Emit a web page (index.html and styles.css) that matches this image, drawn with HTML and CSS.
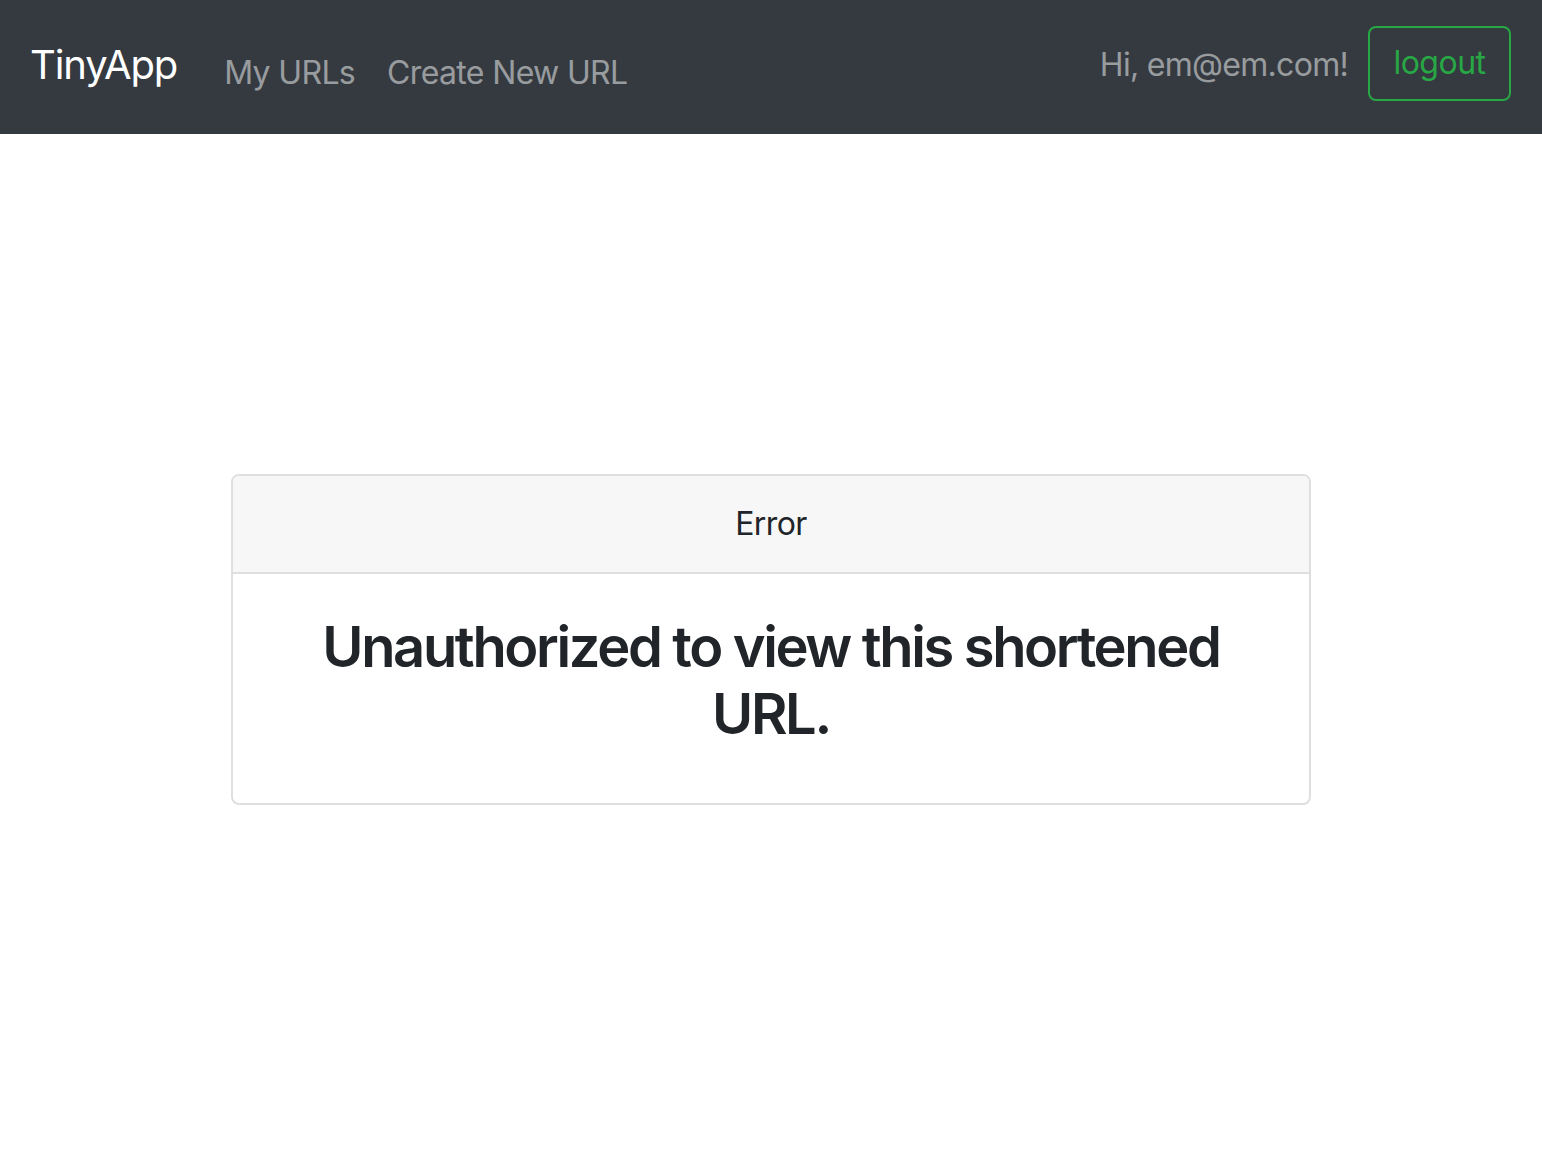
FILE: index.html
```html
<!DOCTYPE html>
<html lang="en">
<head>
<meta charset="utf-8">
<title>TinyApp</title>
<link rel="stylesheet" href="styles.css">
</head>
<body>
<nav class="navbar">
  <a class="brand" href="#">TinyApp</a>
  <div class="nav-links">
    <a class="nav-link" href="#">My URLs</a>
    <a class="nav-link" href="#">Create New URL</a>
  </div>
  <div class="nav-right">
    <span class="greeting">Hi, em@em.com!</span>
    <button class="btn-logout" type="button">logout</button>
  </div>
</nav>
<main class="main">
  <section class="card">
    <header class="card-header">Error</header>
    <div class="card-body">
      <h3 class="card-title">Unauthorized to view this shortened URL.</h3>
    </div>
  </section>
</main>
</body>
</html>
```
FILE: styles.css
```css
* { box-sizing: border-box; }
html, body { margin: 0; padding: 0; }
body {
  font-family: Inter, "Noto Sans", "Liberation Sans", sans-serif;
  color: #212529;
  background: #fff;
}
.navbar {
  height: 134px;
  background: #343a40;
  display: flex;
  align-items: center;
  padding: 0 31px 0 30px;
}
.brand {
  color: #fff;
  text-decoration: none;
  font-size: 40px;
  line-height: 60px;
  letter-spacing: -1.1px;
  margin-top: -5px;
}
.nav-links {
  display: flex;
  gap: 32px;
  margin-left: 47px;
}
.nav-link {
  color: rgba(255,255,255,.5);
  text-decoration: none;
  font-size: 32px;
  line-height: 48px;
  letter-spacing: -0.65px;
  margin-top: 12px;
}
.nav-right {
  margin-left: auto;
  display: flex;
  align-items: center;
  gap: 20px;
  margin-bottom: 7px;
}
.greeting {
  color: rgba(255,255,255,.5);
  font-size: 32px;
  line-height: 48px;
  letter-spacing: -0.7px;
  margin-top: 2px;
}
.btn-logout {
  font-family: inherit;
  font-size: 32px;
  line-height: 48px;
  letter-spacing: -0.5px;
  color: #28a745;
  background: transparent;
  border: 2px solid #28a745;
  border-radius: 8px;
  width: 143px;
  height: 75px;
  padding: 0 0 2px;
}
.main {
  display: flex;
  justify-content: center;
  padding-top: 340px;
}
.card {
  width: 1080px;
  border: 2px solid #dfdfdf;
  border-radius: 8px;
  overflow: hidden;
}
.card-header {
  background: #f7f7f7;
  border-bottom: 2px solid #dfdfdf;
  text-align: center;
  font-size: 32px;
  line-height: 48px;
  letter-spacing: -0.6px;
  padding: 24px 40px 24px;
}
.card-body {
  padding: 40px 40px 39px;
  text-align: center;
}
.card-title {
  margin: 0 0 16px;
  font-size: 56px;
  font-weight: 600;
  line-height: 67px;
  letter-spacing: -2.35px;
}
```
